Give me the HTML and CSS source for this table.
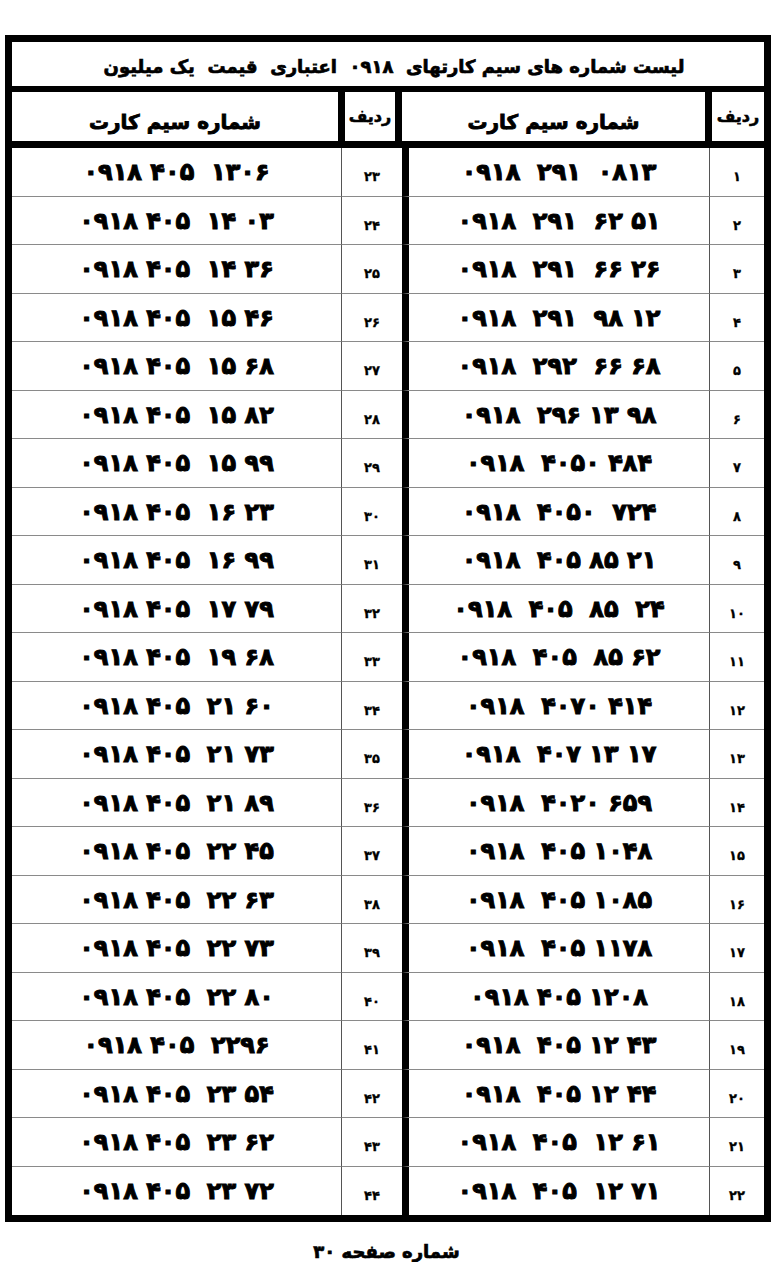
FILE: index.html
```html
<!DOCTYPE html>
<html lang="fa">
<head>
<meta charset="utf-8">
<title>لیست شماره های سیم کارت</title>
<link rel="stylesheet" href="styles.css">
</head>
<body>
<div class="sheet">
  <div class="title">لیست شماره های سیم کارتهای  ۰۹۱۸  اعتباری  قیمت  یک میلیون</div>
  <div class="head">
    <div class="hcell hnum">شماره سیم کارت</div>
    <div class="hcell hrad">ردیف</div>
    <div class="hcell hnum">شماره سیم کارت</div>
    <div class="hcell hrad">ردیف</div>
  </div>
  <div class="rows">
    <div class="num">۰۹۱۸ ۴۰۵  ۱۳۰۶</div><div class="rad">۲۳</div><div class="num split">۰۹۱۸  ۲۹۱  ۰۸۱۳</div><div class="rad last">۱</div>
    <div class="num">۰۹۱۸ ۴۰۵  ۱۴ ۰۳</div><div class="rad">۲۴</div><div class="num split">۰۹۱۸  ۲۹۱  ۶۲ ۵۱</div><div class="rad last">۲</div>
    <div class="num">۰۹۱۸ ۴۰۵  ۱۴ ۳۶</div><div class="rad">۲۵</div><div class="num split">۰۹۱۸  ۲۹۱  ۶۶ ۲۶</div><div class="rad last">۳</div>
    <div class="num">۰۹۱۸ ۴۰۵  ۱۵ ۴۶</div><div class="rad">۲۶</div><div class="num split">۰۹۱۸  ۲۹۱  ۹۸ ۱۲</div><div class="rad last">۴</div>
    <div class="num">۰۹۱۸ ۴۰۵  ۱۵ ۶۸</div><div class="rad">۲۷</div><div class="num split">۰۹۱۸  ۲۹۲  ۶۶ ۶۸</div><div class="rad last">۵</div>
    <div class="num">۰۹۱۸ ۴۰۵  ۱۵ ۸۲</div><div class="rad">۲۸</div><div class="num split">۰۹۱۸  ۲۹۶ ۱۳ ۹۸</div><div class="rad last">۶</div>
    <div class="num">۰۹۱۸ ۴۰۵  ۱۵ ۹۹</div><div class="rad">۲۹</div><div class="num split">۰۹۱۸  ۴۰۵۰ ۴۸۴</div><div class="rad last">۷</div>
    <div class="num">۰۹۱۸ ۴۰۵  ۱۶ ۲۳</div><div class="rad">۳۰</div><div class="num split">۰۹۱۸  ۴۰۵۰  ۷۲۴</div><div class="rad last">۸</div>
    <div class="num">۰۹۱۸ ۴۰۵  ۱۶ ۹۹</div><div class="rad">۳۱</div><div class="num split">۰۹۱۸  ۴۰۵ ۸۵ ۲۱</div><div class="rad last">۹</div>
    <div class="num">۰۹۱۸ ۴۰۵  ۱۷ ۷۹</div><div class="rad">۳۲</div><div class="num split">۰۹۱۸  ۴۰۵  ۸۵  ۲۴</div><div class="rad last">۱۰</div>
    <div class="num">۰۹۱۸ ۴۰۵  ۱۹ ۶۸</div><div class="rad">۳۳</div><div class="num split">۰۹۱۸  ۴۰۵  ۸۵ ۶۲</div><div class="rad last">۱۱</div>
    <div class="num">۰۹۱۸ ۴۰۵  ۲۱ ۶۰</div><div class="rad">۳۴</div><div class="num split">۰۹۱۸  ۴۰۷۰ ۴۱۴</div><div class="rad last">۱۲</div>
    <div class="num">۰۹۱۸ ۴۰۵  ۲۱ ۷۳</div><div class="rad">۳۵</div><div class="num split">۰۹۱۸  ۴۰۷ ۱۳ ۱۷</div><div class="rad last">۱۳</div>
    <div class="num">۰۹۱۸ ۴۰۵  ۲۱ ۸۹</div><div class="rad">۳۶</div><div class="num split">۰۹۱۸  ۴۰۲۰ ۶۵۹</div><div class="rad last">۱۴</div>
    <div class="num">۰۹۱۸ ۴۰۵  ۲۲ ۴۵</div><div class="rad">۳۷</div><div class="num split">۰۹۱۸  ۴۰۵ ۱۰۴۸</div><div class="rad last">۱۵</div>
    <div class="num">۰۹۱۸ ۴۰۵  ۲۲ ۶۳</div><div class="rad">۳۸</div><div class="num split">۰۹۱۸  ۴۰۵ ۱۰۸۵</div><div class="rad last">۱۶</div>
    <div class="num">۰۹۱۸ ۴۰۵  ۲۲ ۷۳</div><div class="rad">۳۹</div><div class="num split">۰۹۱۸  ۴۰۵ ۱۱۷۸</div><div class="rad last">۱۷</div>
    <div class="num">۰۹۱۸ ۴۰۵  ۲۲ ۸۰</div><div class="rad">۴۰</div><div class="num split">۰۹۱۸ ۴۰۵ ۱۲۰۸</div><div class="rad last">۱۸</div>
    <div class="num">۰۹۱۸ ۴۰۵  ۲۲۹۶</div><div class="rad">۴۱</div><div class="num split">۰۹۱۸  ۴۰۵ ۱۲ ۴۳</div><div class="rad last">۱۹</div>
    <div class="num">۰۹۱۸ ۴۰۵  ۲۳ ۵۴</div><div class="rad">۴۲</div><div class="num split">۰۹۱۸  ۴۰۵ ۱۲ ۴۴</div><div class="rad last">۲۰</div>
    <div class="num">۰۹۱۸ ۴۰۵  ۲۳ ۶۲</div><div class="rad">۴۳</div><div class="num split">۰۹۱۸  ۴۰۵  ۱۲ ۶۱</div><div class="rad last">۲۱</div>
    <div class="num">۰۹۱۸ ۴۰۵  ۲۳ ۷۲</div><div class="rad">۴۴</div><div class="num split">۰۹۱۸  ۴۰۵  ۱۲ ۷۱</div><div class="rad last">۲۲</div>
  </div>
</div>
<div class="footer">شماره صفحه ۳۰</div>
</body>
</html>
```
FILE: styles.css
```css
html, body {
  margin: 0;
  padding: 0;
  background: #fff;
}
body {
  font-family: "DejaVu Sans", sans-serif;
  font-weight: bold;
  color: #000;
}
.sheet {
  margin: 35px 0 0 5px;
  width: 766px;
  box-sizing: border-box;
  border: 7px solid #000;
  direction: ltr;
}
.title {
  height: 50px;
  box-sizing: border-box;
  border-bottom: 6px solid #000;
  direction: rtl;
  text-align: center;
  white-space: pre;
  font-size: 18px;
  line-height: 50px;
  padding-left: 12px;
  -webkit-text-stroke: 0.7px #000;
}
.head {
  display: grid;
  grid-template-columns: 326px 64px 303px 59px;
  height: 56px;
  box-sizing: border-box;
  border-bottom: 7px solid #000;
  overflow: hidden;
}
.hcell {
  direction: rtl;
  text-align: center;
  line-height: 60px;
}
.hnum {
  font-size: 20px;
  -webkit-text-stroke: 0.9px #000;
}
.hrad {
  font-size: 16px;
  line-height: 50px;
  border-left: 7px solid #000;
  border-right: 7px solid #000;
  -webkit-text-stroke: 0.6px #000;
}
.head .hrad:last-child {
  border-right: 0;
}
.rows {
  display: grid;
  grid-template-columns: 329px 61px 307px 55px;
  grid-auto-rows: 48.5px;
}
.num, .rad {
  box-sizing: border-box;
  border-bottom: 1px solid #8a8a8a;
  display: flex;
  align-items: center;
  justify-content: center;
}
.rows > div:nth-last-child(-n+4) {
  border-bottom: 0;
}
.num {
  direction: ltr;
  white-space: pre;
  font-size: 24px;
  letter-spacing: -1.3px;
  -webkit-text-stroke: 1px #000;
  padding-top: 1px;
}
.num.split {
  border-left: 7px solid #000;
}
.rad {
  border-left: 1px solid #555;
  font-size: 13px;
  padding-top: 10px;
  direction: rtl;
  -webkit-text-stroke: 0.3px #000;
}
.footer {
  direction: rtl;
  text-align: center;
  font-size: 18px;
  margin-top: 19px;
  padding-right: 4px;
  -webkit-text-stroke: 0.7px #000;
}
```
